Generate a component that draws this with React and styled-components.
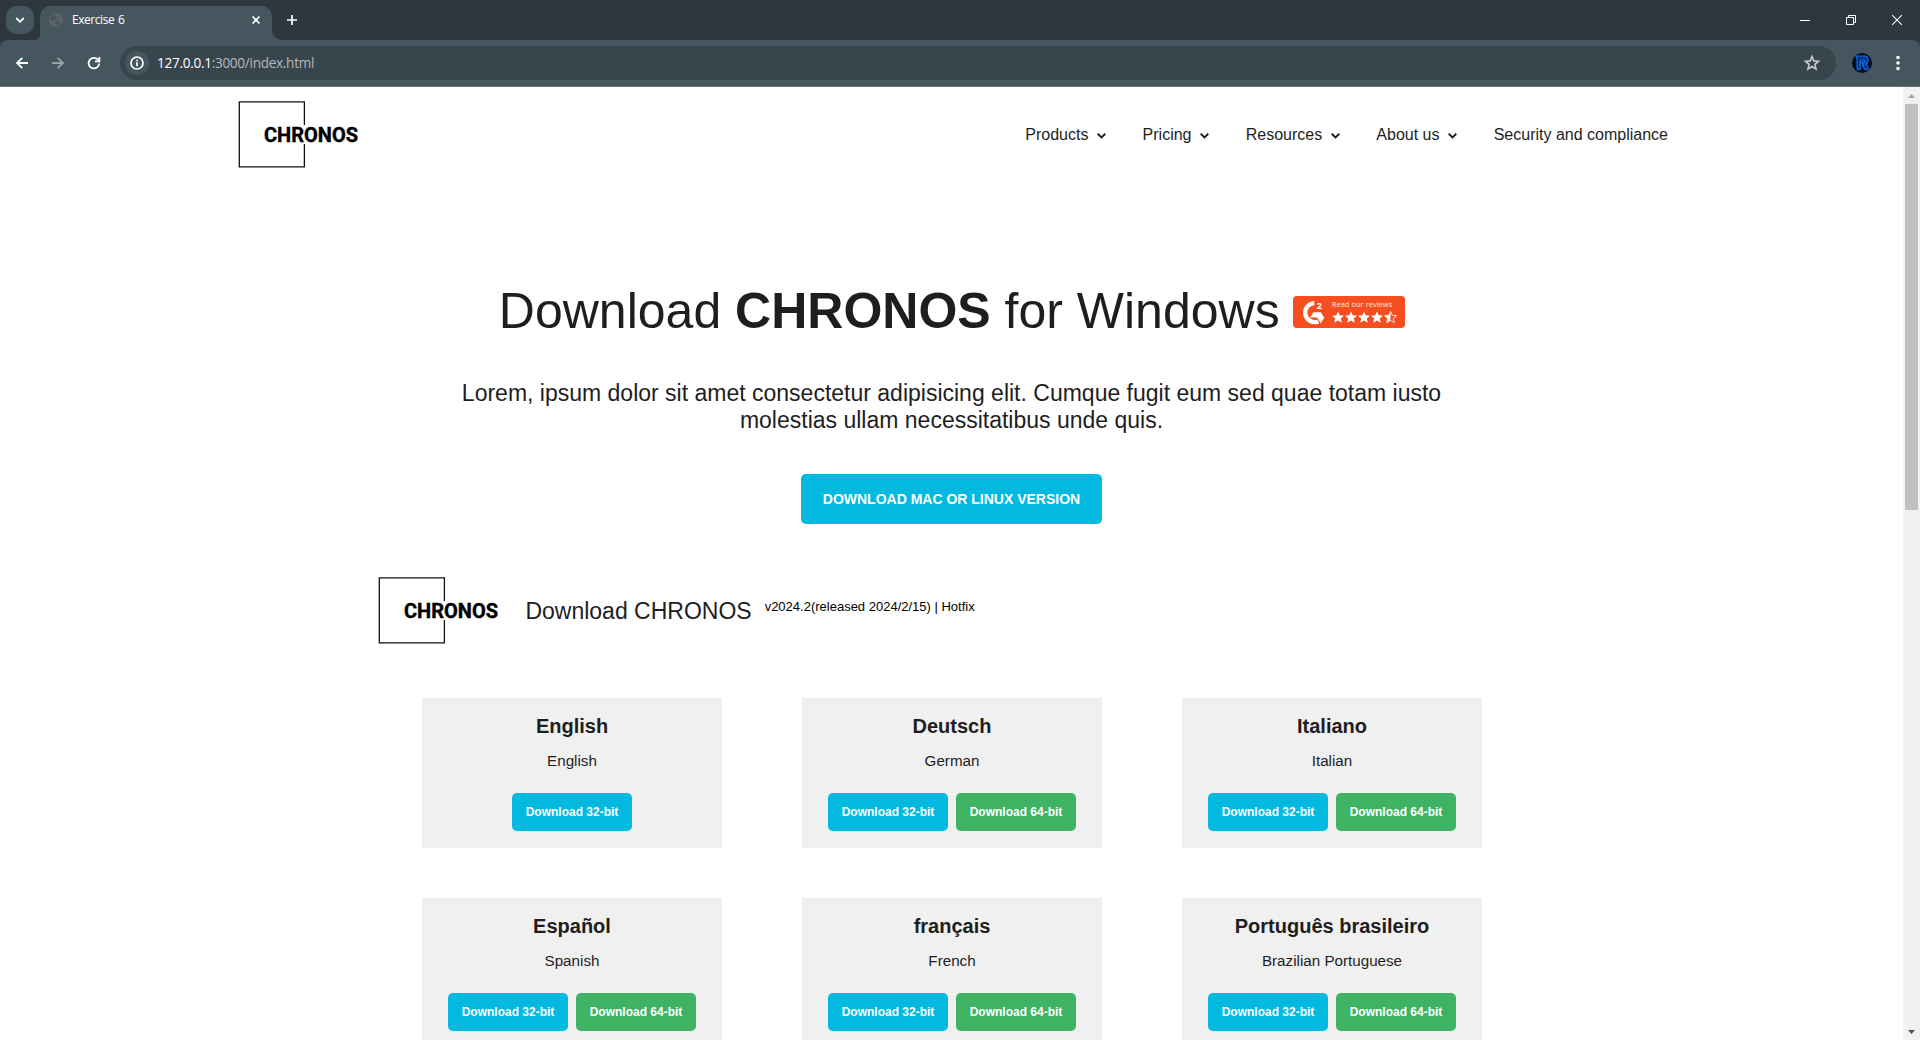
import React from 'react';
import styled, { createGlobalStyle } from 'styled-components';

const Global = createGlobalStyle`
  * { box-sizing: border-box; }
  body { margin: 0; background: #fff; overflow: hidden; }
  h1, h2, p { margin: 0; font-weight: 400; }
  svg { display: block; flex: none; }
`;

const arial = `Arial, "Liberation Sans", sans-serif`;

const Window = styled.div`
  width: 1920px;
  height: 1040px;
  display: flex;
  flex-direction: column;
  overflow: hidden;
  font-family: ${arial};
  color: #1e1e1e;
`;

const TabStrip = styled.div`
  height: 40px;
  flex: none;
  display: flex;
  align-items: flex-end;
  padding-left: 6px;
  background: #2d373d;
`;

const TabSearch = styled.div`
  width: 28px;
  height: 28px;
  margin-bottom: 6px;
  display: grid;
  place-items: center;
  border-radius: 10px;
  background: #46565f;
`;

const Flare = styled.svg`
  width: ${(p) => p.$size}px;
  height: ${(p) => p.$size}px;
  fill: #46565f;
`;

const Tab = styled.div`
  width: 232px;
  height: 34px;
  display: flex;
  align-items: center;
  padding: 0 10px 6px 9px;
  border-radius: 10px 10px 0 0;
  background: #46565f;
  color: #fff;
  font: 12px "Open Sans", "Noto Sans", sans-serif;
`;

const TabTitle = styled.span`
  flex: 1;
  margin-left: 9px;
  letter-spacing: -0.45px;
  word-spacing: 1px;
  line-height: 28px;
`;

const NewTab = styled.div`
  align-self: center;
  margin-left: 4px;
`;

const WindowControls = styled.div`
  margin-left: auto;
  align-self: stretch;
  display: flex;
`;

const Control = styled.div`
  width: 46px;
  display: grid;
  place-items: center;
`;

const ToolbarWrap = styled.div`
  height: 47px;
  flex: none;
  background: #2d373d;
`;

const Toolbar = styled.div`
  height: 47px;
  display: flex;
  align-items: center;
  padding: 0 12px 1px;
  border-radius: 8px 8px 0 0;
  border-bottom: 1px solid #64757e;
  background: #46565f;
`;

const NavButton = styled.div`
  width: 20px;
  height: 20px;
  margin-right: 16px;
  opacity: ${(p) => (p.$dim ? 0.45 : 1)};
`;

const AddressBar = styled.div`
  width: 1716px;
  height: 34px;
  display: flex;
  align-items: center;
  padding: 0 14px 0 5px;
  border-radius: 17px;
  background: #39454c;
`;

const SiteInfo = styled.div`
  width: 24px;
  height: 24px;
  display: grid;
  place-items: center;
  border-radius: 50%;
  background: #46565f;
`;

const Url = styled.span`
  flex: 1;
  margin-left: 8px;
  color: #b1b7ba;
  font: 13.6px "Open Sans", "Noto Sans", sans-serif;
  letter-spacing: -0.3px;
  b { font-weight: 400; color: #fff; }
`;

const Profile = styled.div`
  margin: 0 24px 0 16px;
`;

const Viewport = styled.div`
  flex: 1;
  min-height: 0;
  display: flex;
`;

const Page = styled.main`
  flex: 1;
  overflow: hidden;
  background: #fff;
`;

const ScrollTrack = styled.div`
  width: 17px;
  display: flex;
  flex-direction: column;
  align-items: center;
  background: #f1f1f1;
`;

const ScrollArrow = styled.div`
  height: 17px;
  display: grid;
  place-items: center;
`;

const ScrollThumb = styled.div`
  width: 13px;
  height: 406px;
  margin-bottom: auto;
  background: #c1c1c1;
`;

const Header = styled.header`
  height: 96px;
  display: flex;
  align-items: center;
  justify-content: space-between;
  padding: 0 235px 0 238px;
`;

const Menu = styled.nav`
  display: flex;
  font-size: 16px;
  line-height: 18px;
`;

const MenuItem = styled.a`
  display: flex;
  align-items: center;
  svg { margin: 1px 36.6px 0 8.6px; }
`;

const Title = styled.h1`
  margin-top: 88px;
  height: 80px;
  display: flex;
  align-items: center;
  justify-content: center;
  gap: 13.5px;
  padding-left: 1px;
  font-size: 50px;
  line-height: 57px;
  svg { margin-top: 2px; }
`;

const Lead = styled.p`
  width: 1000px;
  margin: 29px auto 0;
  text-align: center;
  font-size: 23px;
  line-height: 27px;
`;

const Cta = styled.button`
  display: block;
  width: 301px;
  height: 50px;
  margin: 40px auto 0;
  padding: 0;
  border: 0;
  border-radius: 5px;
  background: #03b9df;
  color: #fff;
  font: bold 14px ${arial};
`;

const Release = styled.section`
  display: flex;
  align-items: center;
  height: 68px;
  margin: 53px 0 0 378px;
`;

const ReleaseTitle = styled.h2`
  margin-left: 25.4px;
  font-size: 23px;
  line-height: 26px;
`;

const Version = styled.span`
  margin: 0 0 10px 13px;
  font-size: 13px;
  line-height: 15px;
  color: #000;
`;

const Grid = styled.section`
  display: grid;
  grid-template-columns: repeat(3, 300px);
  column-gap: 80px;
  row-gap: 50px;
  margin: 53px 0 0 422px;
`;

const Card = styled.article`
  height: 150px;
  display: flex;
  flex-direction: column;
  align-items: center;
  padding-top: 17px;
  background: #f0f0f0;
`;

const Language = styled.h2`
  font-size: 20px;
  font-weight: bold;
  line-height: 23px;
`;

const LanguageName = styled.p`
  margin-top: 14px;
  font-size: 15.2px;
  line-height: 17px;
`;

const Actions = styled.div`
  display: flex;
  gap: 8px;
  margin-top: 24px;
`;

const Download = styled.button`
  width: 120px;
  height: 38px;
  padding: 0;
  border: 0;
  border-radius: 5px;
  background: ${(p) => (p.$green ? '#3eb364' : '#03b9df')};
  color: #fff;
  font: bold 12px ${arial};
`;

function Logo() {
  return (
    <svg width="122" height="68" viewBox="0 0 122 68">
      <path d="M66.4 24V.8H1.3V65.8H66.4V43" fill="none" stroke="#111" strokeWidth="1.3" />
      <text x="26" y="40.7" fontFamily="Roboto" fontWeight="700" fontSize="20" textLength="94" lengthAdjust="spacingAndGlyphs" fill="#000" stroke="#000" strokeWidth=".4">CHRONOS</text>
    </svg>
  );
}

function Chevron() {
  return (
    <svg width="9" height="6" viewBox="0 0 9 6" fill="none" stroke="#1e1e1e" strokeWidth="1.9">
      <path d="M.7.7 4.5 4.4 8.3.7" />
    </svg>
  );
}

const star = 'M6 0 7.7 3.9 12 4.3 8.8 7.1 9.8 11.3 6 9.1 2.2 11.3 3.2 7.1 0 4.3 4.3 3.9Z';

function ReviewBadge() {
  return (
    <svg width="112" height="32" viewBox="0 0 112 32">
      <rect width="112" height="32" rx="4" fill="#f64e1e" />
      <path d="M22 5.6A10.6 10.6 0 1 0 26.5 26" fill="none" stroke="#fff" strokeWidth="4.8" transform="translate(1.5 2) scale(.9)" />
      <path d="M20.5 16.2h7.4l3.3 5.500-3.500 5.600-3.400-5.800h-7.200Z" fill="#fff" />
      <text x="23.600" y="13" fontFamily="Open Sans" fontWeight="700" fontSize="9.500" fill="#fff">2</text>
      <text x="38.800" y="11" fontFamily="Open Sans" fontSize="8" textLength="60.500" lengthAdjust="spacingAndGlyphs" fill="#ffe9e2">Read our reviews</text>
      {[39, 52, 65, 78].map((x) => (
        <path key={x} d={star} fill="#fff" transform={`translate(${x} 15.4)`} />
      ))}
      <g transform="translate(91.5 15.4)">
        <path d={star} fill="none" stroke="#fff" strokeWidth=".8" />
        <path d="M6 0V9.1L2.200 11.300 3.200 7.100 0 4.300 4.300 3.900Z" fill="#fff" />
      </g>
    </svg>
  );
}

function Stroke({ size = 20, width = 2, color = '#fff', d, box = 20 }) {
  return (
    <svg width={size} height={size} viewBox={`0 0 ${box} ${box}`} fill="none" stroke={color} strokeWidth={width}>
      <path d={d} />
    </svg>
  );
}

const languages = [
  ['English', 'English', false],
  ['Deutsch', 'German', true],
  ['Italiano', 'Italian', true],
  ['Español', 'Spanish', true],
  ['français', 'French', true],
  ['Português brasileiro', 'Brazilian Portuguese', true],
];

export default function App() {
  return (
    <Window>
      <Global />
      <TabStrip>
        <TabSearch><Stroke size={10} box={10} width={1.8} d="M1.2 3 5 6.8 8.8 3" /></TabSearch>
        <Flare $size={6} viewBox="0 0 6 6"><path d="M6 0V6H0A6 6 0 0 0 6 0Z" /></Flare>
        <Tab>
          <svg width="14" height="14" viewBox="0 0 14 14">
            <circle cx="7" cy="7" r="7" fill="#5f6368" />
            <path d="M2 4.2C3.2 2.6 5 1.7 6.8 1.8c1 .8-.6 1.6.4 2.5 1 .8 2 .3 2.2 1.6-.1 1.3-2 .7-2.7 1.4-1.3-.2-2.6-.1-3.5.9C2 7.5 1.5 5.5 2 4.2ZM7.5 8.2c1.5-.4 3.2.1 4.3 1.1-1 1.8-2.5 2.9-4.5 3 .2-1.2-1.2-1.6-1.3-2.5 0-.8.7-1.3 1.5-1.6Z" fill="#46565f" />
          </svg>
          <TabTitle>Exercise 6</TabTitle>
          <Stroke size={12} box={12} width={1.6} d="M2.5 2.5 9.5 9.5M9.5 2.5 2.5 9.5" />
        </Tab>
        <Flare $size={10} viewBox="0 0 10 10"><path d="M0 0V10H10A10 10 0 0 1 0 0Z" /></Flare>
        <NewTab><Stroke size={12} box={12} width={1.7} d="M6 1V11M1 6H11" /></NewTab>
        <WindowControls>
          <Control><Stroke size={10} box={10} width={1} d="M0 5.5H10" /></Control>
          <Control><Stroke size={10} box={10} width={1} d="M.5 2.5H7.5V9.5H.5ZM2.5 2.5V.5H9.5V7.5H7.5" /></Control>
          <Control><Stroke size={10} box={10} width={1.1} d="M0 0 10 10M10 0 0 10" /></Control>
        </WindowControls>
      </TabStrip>
      <ToolbarWrap>
        <Toolbar>
          <NavButton><Stroke width={1.8} d="M16 10H5M10.3 4.8 5 10 10.3 15.2" /></NavButton>
          <NavButton $dim><Stroke width={1.8} d="M4 10H15M9.7 4.8 15 10 9.7 15.2" /></NavButton>
          <NavButton><Stroke width={1.8} d="M15.2 10.5A5.3 5.3 0 1 1 13.5 6.2L15 7.7M15.4 4V8.3H11" /></NavButton>
          <AddressBar>
            <SiteInfo>
              <svg width="14" height="14" viewBox="0 0 14 14" fill="none" stroke="#fff" strokeWidth="1.7">
                <circle cx="7" cy="7" r="6" />
                <path d="M7 6.2V10.2M7 3.7V5.2" />
              </svg>
            </SiteInfo>
            <Url><b>127.0.0.1</b>:3000/index.html</Url>
            <Stroke color="#c7c7c7" width={1.6} d="M10 3.6 11.8 7.9 16.5 8.3 12.9 11.4 14 16 10 13.5 6 16 7.1 11.4 3.5 8.3 8.2 7.9Z" />
          </AddressBar>
          <Profile>
            <svg width="20" height="20" viewBox="0 0 20 20">
              <circle cx="10" cy="10" r="10" fill="#060b1c" />
              <path d="M4 3H12.500C17.300 3 17 9.600 14 10.800L16.300 14.800C17 16.600 13.600 17.700 12.700 16L10.300 12.300M4 3C4 4.500 5 4.800 5 6V15.700C5 17.300 8.300 17.300 8.300 15.700V7.200H11.500C13 7.200 13 9.600 11.500 9.600H10L12.200 13" fill="#06318c" stroke="#1176e8" strokeWidth="1.100" />
            </svg>
          </Profile>
          <svg width="4" height="16" viewBox="0 0 4 16" fill="#fff">
            <circle cx="2" cy="2.5" r="1.8" /><circle cx="2" cy="8" r="1.8" /><circle cx="2" cy="13.5" r="1.8" />
          </svg>
        </Toolbar>
      </ToolbarWrap>
      <Viewport>
        <Page>
          <Header>
            <Logo />
            <Menu>
              {['Products', 'Pricing', 'Resources', 'About us'].map((name) => (
                <MenuItem key={name}>{name}<Chevron /></MenuItem>
              ))}
              <MenuItem>Security and compliance</MenuItem>
            </Menu>
          </Header>
          <Title>
            <span>Download <b>CHRONOS</b> for Windows</span>
            <ReviewBadge />
          </Title>
          <Lead>
            Lorem, ipsum dolor sit amet consectetur adipisicing elit. Cumque fugit eum sed quae totam iusto molestias ullam necessitatibus unde quis.
          </Lead>
          <Cta>DOWNLOAD MAC OR LINUX VERSION</Cta>
          <Release>
            <Logo />
            <ReleaseTitle>Download CHRONOS</ReleaseTitle>
            <Version>v2024.2(released 2024/2/15) | Hotfix</Version>
          </Release>
          <Grid>
            {languages.map(([native, english, has64]) => (
              <Card key={native}>
                <Language>{native}</Language>
                <LanguageName>{english}</LanguageName>
                <Actions>
                  <Download>Download 32-bit</Download>
                  {has64 && <Download $green>Download 64-bit</Download>}
                </Actions>
              </Card>
            ))}
          </Grid>
        </Page>
        <ScrollTrack>
          <ScrollArrow><svg width="7" height="4" viewBox="0 0 7 4" fill="#a3a3a3"><path d="M0 4 3.5 0 7 4Z" /></svg></ScrollArrow>
          <ScrollThumb />
          <ScrollArrow><svg width="7" height="4" viewBox="0 0 7 4" fill="#505050"><path d="M0 0 3.5 4 7 0Z" /></svg></ScrollArrow>
        </ScrollTrack>
      </Viewport>
    </Window>
  );
}
